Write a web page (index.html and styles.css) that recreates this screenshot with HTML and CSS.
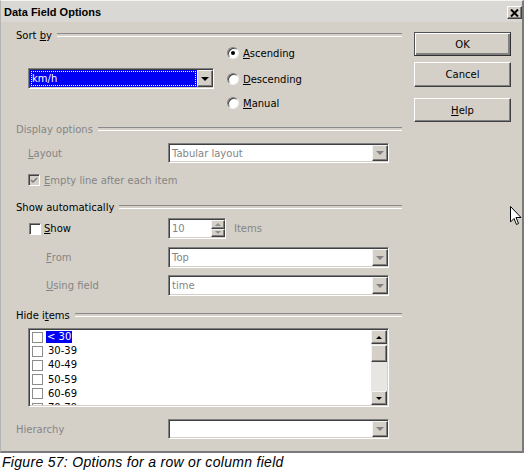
FILE: index.html
```html
<!DOCTYPE html>
<html>
<head>
<meta charset="utf-8">
<link rel="stylesheet" href="styles.css">
</head>
<body>
<div class="dialog">
  <div class="titlebar">
    <span class="title">Data Field Options</span>
    <span class="close"><svg width="9" height="8" viewBox="0 0 9 8"><path d="M1 0.5 L8 7.5 M8 0.5 L1 7.5" stroke="#000" stroke-width="2"/></svg></span>
  </div>
  <div class="body">
    <div class="main">
      <div class="gh gh-sort"><span>Sort <u>b</u>y</span></div>
      <div class="sort">
        <div class="combo combo-sort">
          <div class="field sel"><span class="focus">km/h</span></div>
          <div class="drop"><span class="tri"></span></div>
        </div>
        <div class="radios">
          <div class="radio"><span class="rb on"></span><span><u>A</u>scending</span></div>
          <div class="radio r2"><span class="rb"></span><span><u>D</u>escending</span></div>
          <div class="radio r3"><span class="rb"></span><span><u>M</u>anual</span></div>
        </div>
      </div>

      <div class="gh gh-disp dis"><span>Display options</span></div>
      <div class="row row-layout dis">
        <div class="lbl"><u>L</u>ayout</div>
        <div class="combo combo-wide">
          <div class="field">Tabular layout</div>
          <div class="drop"><span class="tri grey"></span></div>
        </div>
      </div>
      <div class="row row-empty dis">
        <span class="cb cb-dis"><svg width="8" height="7" viewBox="0 0 8 7"><path d="M1 3 L3 5 L7 1" stroke="#7c7c7c" stroke-width="1.5" fill="none"/></svg></span>
        <span class="cb-text"><u>E</u>mpty line after each item</span>
      </div>

      <div class="gh gh-show"><span>Show automatically</span></div>
      <div class="row row-show">
        <div class="lbl lbl-show"><span class="cb"></span><span class="cb-text"><u>S</u>how</span></div>
        <div class="spin">
          <div class="field dis">10</div>
          <div class="spin-btns">
            <div class="sbtn"><span class="tri-up grey"></span></div>
            <div class="sbtn"><span class="tri-sm grey"></span></div>
          </div>
        </div>
        <span class="items dis">Items</span>
      </div>
      <div class="row row-from dis">
        <div class="lbl lbl-ind"><u>F</u>rom</div>
        <div class="combo combo-wide">
          <div class="field">Top</div>
          <div class="drop"><span class="tri grey"></span></div>
        </div>
      </div>
      <div class="row row-using dis">
        <div class="lbl lbl-ind"><u>U</u>sing field</div>
        <div class="combo combo-wide">
          <div class="field">time</div>
          <div class="drop"><span class="tri grey"></span></div>
        </div>
      </div>

      <div class="gh gh-hide"><span>Hide i<u>t</u>ems</span></div>
      <div class="listbox">
        <div class="list">
          <div class="item"><span class="lcb"></span><span class="itext hl">&lt; 30</span></div>
          <div class="item"><span class="lcb"></span><span class="itext">30-39</span></div>
          <div class="item"><span class="lcb"></span><span class="itext">40-49</span></div>
          <div class="item"><span class="lcb"></span><span class="itext">50-59</span></div>
          <div class="item"><span class="lcb"></span><span class="itext">60-69</span></div>
          <div class="item"><span class="lcb"></span><span class="itext">70-79</span></div>
        </div>
        <div class="vscroll">
          <div class="sb-btn"><span class="tri-up"></span></div>
          <div class="sb-track"><div class="sb-thumb"></div></div>
          <div class="sb-btn"><span class="tri-sm"></span></div>
        </div>
      </div>

      <div class="row row-hier dis">
        <div class="lbl lbl-hier">Hierarchy</div>
        <div class="combo combo-wide">
          <div class="field"></div>
          <div class="drop"><span class="tri grey"></span></div>
        </div>
      </div>
    </div>

    <div class="buttons">
      <div class="btn btn-ok"><span>OK</span></div>
      <div class="btn btn-cancel"><span>Cancel</span></div>
      <div class="btn btn-help"><span><u>H</u>elp</span></div>
    </div>
  </div>
</div>
<div class="cursor"><svg width="12" height="20" viewBox="0 0 12 20"><path d="M0.5 0.5 L0.5 16 L4 12.5 L6.5 18.5 L8.5 17.5 L6 11.5 L11 11.5 Z" fill="#fff" stroke="#000" stroke-width="1"/></svg></div>
<p class="caption">Figure 57: Options for a row or column field</p>
</body>
</html>
```

FILE: styles.css
```css
* { box-sizing: border-box; }

body {
  margin: 0;
  background: #ffffff;
  font-family: "DejaVu Sans", "Liberation Sans", sans-serif;
  font-size: 10px;
  color: #000;
  position: relative;
}

u { text-decoration: underline; text-underline-offset: 1px; }

.dialog {
  width: 524px;
  height: 453px;
  background: #d4d0c8;
  border-top: 1px solid #f4f4f4;
  border-left: 1px solid #b4b4b4;
  border-right: 2px solid #7a7a7a;
  border-bottom: 2px solid #7a7a7a;
  display: flex;
  flex-direction: column;
}

.titlebar {
  height: 21px;
  flex: none;
  display: flex;
  align-items: center;
  justify-content: space-between;
  padding: 0 0 0 3px;
  background: #d9d8d5;
}

.title {
  font-family: "Liberation Sans", sans-serif;
  font-weight: bold;
  font-size: 11px;
}

.close {
  width: 15px;
  height: 13px;
  margin-top: 2px;
  display: flex;
  align-items: center;
  justify-content: center;
  background: #d4d0c8;
  border: 1px solid;
  border-color: #ffffff #404040 #404040 #ffffff;
  box-shadow: inset -1px -1px #808080;
}

.body {
  display: flex;
  flex: 1;
}

.main {
  width: 401px;
  padding-left: 15px;
}

/* group headings */
.gh {
  display: flex;
  align-items: center;
  height: 13px;
  line-height: 13px;
}
.gh::after {
  content: "";
  flex: 1;
  height: 2px;
  margin-left: 5px;
  margin-top: -1px;
  border-top: 1px solid #8a8a8a;
  border-bottom: 1px solid #ffffff;
}
.gh-sort { margin-top: 7px; }
.gh-disp { margin-top: 13px; }
.gh-show { margin-top: 14px; }
.gh-hide { margin-top: 13px; }

.dis { color: #858585; }

/* sort section */
.sort {
  display: flex;
  height: 68px;
}
.combo-sort {
  margin-left: 12px;
  margin-top: 26px;
  width: 186px;
  height: 21px;
}
.radios {
  margin-left: 13px;
  padding-top: 4px;
}
.radio {
  display: flex;
  align-items: center;
  height: 14px;
}
.radio.r2 { margin-top: 12px; }
.radio.r3 { margin-top: 10px; }
.rb {
  width: 12px;
  height: 12px;
  margin-right: 4px;
  border-radius: 50%;
  background: #ffffff;
  border: 1px solid;
  border-color: #808080 #f0f0f0 #f0f0f0 #808080;
  box-shadow: inset 1px 1px #404040;
  position: relative;
}
.rb.on::after {
  content: "";
  position: absolute;
  left: 3px;
  top: 3px;
  width: 4px;
  height: 4px;
  border-radius: 50%;
  background: #000;
}

/* combo box */
.combo {
  display: flex;
  background: #ffffff;
  border: 1px solid;
  border-color: #808080 #ffffff #ffffff #808080;
  box-shadow: inset 1px 1px #404040, inset -1px -1px #d4d0c8;
  padding: 1px 0 1px 1px;
}
.combo-wide {
  width: 221px;
  height: 21px;
}
.field {
  flex: 1;
  display: flex;
  align-items: center;
  padding-left: 2px;
  overflow: hidden;
  white-space: nowrap;
}
.field.sel {
  background: #0000f4;
  color: #ffffff;
  padding-left: 0;
  padding: 1px;
}
.focus {
  display: flex;
  align-items: center;
  width: 100%;
  height: 100%;
  outline: 1px dotted #ffffff;
  outline-offset: -1px;
  padding-left: 1px;
}
.drop {
  width: 16px;
  flex: none;
  display: flex;
  align-items: center;
  justify-content: center;
  background: #d4d0c8;
  border: 1px solid;
  border-color: #f4f4f4 #404040 #404040 #f4f4f4;
  box-shadow: inset -1px -1px #808080;
}
.tri {
  width: 0;
  height: 0;
  border-left: 4px solid transparent;
  border-right: 4px solid transparent;
  border-top: 4px solid #000;
}
.tri.grey { border-top-color: #808080; }
.tri-sm {
  width: 0;
  height: 0;
  border-left: 3px solid transparent;
  border-right: 3px solid transparent;
  border-top: 3px solid #000;
}
.tri-up {
  width: 0;
  height: 0;
  border-left: 3px solid transparent;
  border-right: 3px solid transparent;
  border-bottom: 3px solid #000;
}
.tri-sm.grey { border-top-color: #909090; }
.tri-up.grey { border-bottom-color: #909090; }

/* rows */
.row {
  display: flex;
  align-items: center;
  padding-left: 12px;
}
.lbl {
  width: 140px;
  flex: none;
  display: flex;
  align-items: center;
}
.lbl-ind { padding-left: 18px; }
.lbl-show { padding-left: 1px; }
.row-layout { margin-top: 7px; height: 20px; }
.row-layout .combo { height: 20px; }
.row-empty { margin-top: 10px; height: 14px; }
.row-show { margin-top: 4px; height: 21px; }
.row-from { margin-top: 8px; height: 21px; }
.row-using { margin-top: 7px; height: 21px; }
.row-hier { margin-top: 12px; height: 20px; padding-left: 0; }
.row-hier .combo { height: 20px; }
.lbl-hier { width: 152px; }

.cb {
  width: 12px;
  height: 12px;
  flex: none;
  background: #ffffff;
  border: 1px solid;
  border-color: #808080 #ffffff #ffffff #808080;
  box-shadow: inset 1px 1px #404040;
  display: flex;
  align-items: center;
  justify-content: center;
}
.cb-dis { background: #d4d0c8; }
.cb-text { margin-left: 4px; }
.lbl-show .cb-text { margin-left: 3px; }

/* spin field */
.spin {
  display: flex;
  width: 58px;
  height: 21px;
  background: #ffffff;
  border: 1px solid;
  border-color: #808080 #ffffff #ffffff #808080;
  box-shadow: inset 1px 1px #404040, inset -1px -1px #d4d0c8;
  padding: 1px 0 1px 1px;
}
.spin-btns {
  width: 14px;
  flex: none;
  display: flex;
  flex-direction: column;
}
.sbtn {
  flex: 1;
  display: flex;
  align-items: center;
  justify-content: center;
  background: #d4d0c8;
  border: 1px solid;
  border-color: #f4f4f4 #404040 #404040 #f4f4f4;
  box-shadow: inset -1px -1px #808080;
}
.items { margin-left: 8px; }

/* list box */
.listbox {
  margin-top: 6px;
  margin-left: 12px;
  width: 361px;
  height: 79px;
  display: flex;
  background: #ffffff;
  border: 1px solid;
  border-color: #808080 #ffffff #ffffff #808080;
  box-shadow: inset 1px 1px #404040, inset -1px -1px #d4d0c8;
  padding: 1px 1px 1px 1px;
}
.list {
  flex: 1;
  overflow: hidden;
  padding-top: 0;
}
.item {
  height: 14.2px;
  display: flex;
  align-items: center;
}
.lcb {
  width: 11px;
  height: 11px;
  margin-left: 2px;
  background: #ffffff;
  border: 1px solid #8c8c8c;
  flex: none;
}
.itext { margin-left: 4px; padding: 0 1px; line-height: 12px; }
.itext.hl { background: #0000f4; color: #ffffff; margin-left: 3px; }

.vscroll {
  width: 16px;
  flex: none;
  display: flex;
  flex-direction: column;
}
.sb-btn {
  height: 14px;
  flex: none;
  display: flex;
  align-items: center;
  justify-content: center;
  background: #d4d0c8;
  border: 1px solid;
  border-color: #f4f4f4 #404040 #404040 #f4f4f4;
  box-shadow: inset -1px -1px #808080;
}
.sb-track {
  flex: 1;
  background: #e8e6e2;
  padding-top: 1px;
}
.sb-thumb {
  height: 17px;
  background: #d4d0c8;
  border: 1px solid;
  border-color: #f4f4f4 #404040 #404040 #f4f4f4;
  box-shadow: inset -1px -1px #808080;
}

/* buttons */
.buttons {
  margin-left: 12px;
  width: 97px;
  display: flex;
  flex-direction: column;
}
.btn {
  display: flex;
  align-items: center;
  justify-content: center;
  background: #d4d0c8;
  border: 1px solid;
  border-color: #ffffff #404040 #404040 #ffffff;
  box-shadow: inset -1px -1px #808080;
}
.btn-ok {
  margin-top: 10px;
  height: 24px;
  border-color: #505050 #303030 #303030 #505050;
  box-shadow: inset 1px 1px #ffffff, inset -2px -2px #808080;
}
.btn-cancel { margin-top: 6px; height: 25px; }
.btn-help { margin-top: 11px; height: 24px; }

.cursor {
  position: absolute;
  left: 510px;
  top: 206px;
  width: 12px;
  height: 20px;
}
.cursor svg { display: block; }

.caption {
  margin: 1px 0 0 2px;
  font-family: "Liberation Sans", Arial, sans-serif;
  font-style: italic;
  font-size: 14px;
  line-height: 16px;
  letter-spacing: 0.3px;
  color: #000;
}
```
